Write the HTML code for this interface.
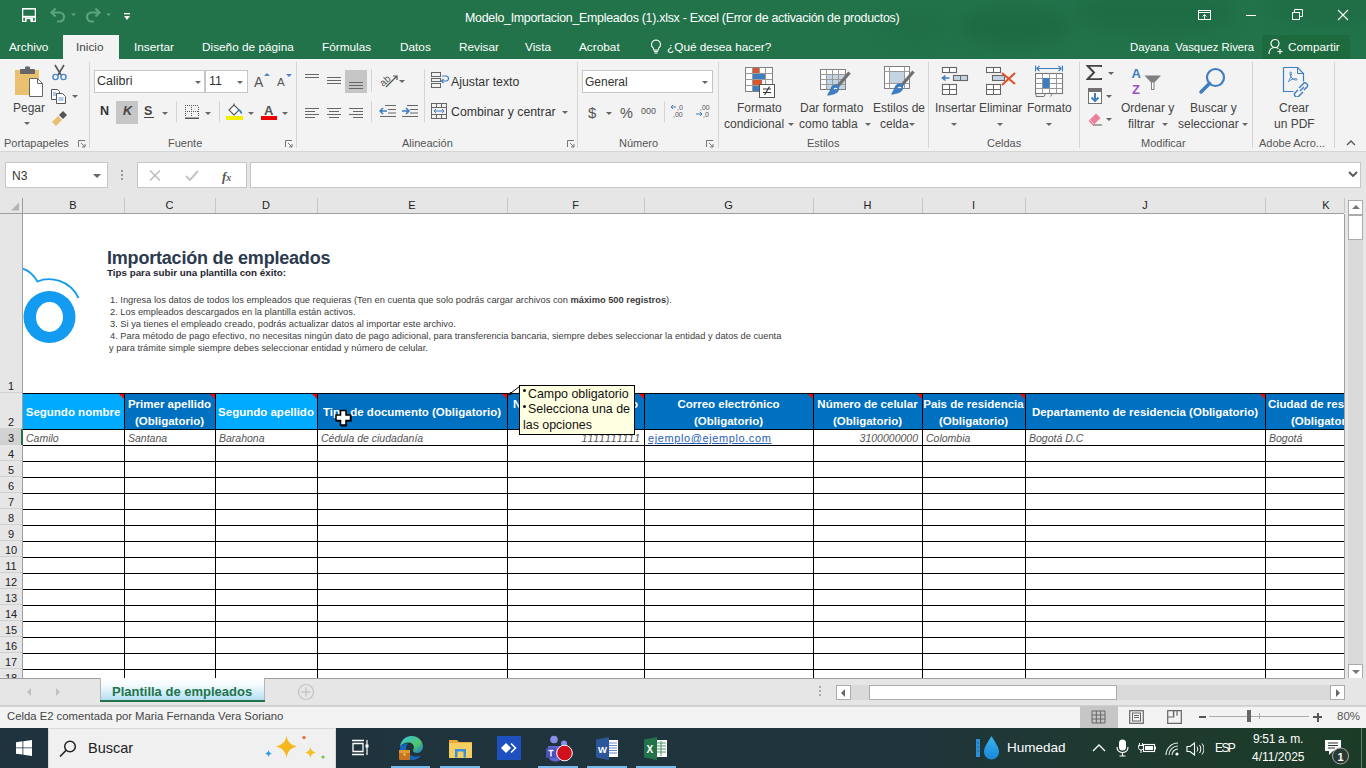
<!DOCTYPE html>
<html><head><meta charset="utf-8">
<style>
*{margin:0;padding:0;box-sizing:border-box}
html,body{width:1366px;height:768px;overflow:hidden;background:#fff;font-family:"Liberation Sans",sans-serif}
.a{position:absolute}
#title{left:0;top:0;width:1366px;height:59px;background:#22734a}
#ribbon{left:0;top:59px;width:1366px;height:93px;background:#f3f3f3;border-bottom:1px solid #d5d5d5}
#fbar{left:0;top:152px;width:1366px;height:46px;background:#e6e6e6}
#colhdr{left:0;top:198px;width:1344px;height:16px;background:#e6e6e6;border-bottom:1px solid #ababab}
#grid{left:0;top:214px;width:1344px;height:464px;background:#fff;overflow:hidden}
#vscroll{left:1345px;top:198px;width:21px;height:480px;background:#e6e6e6}
#tabs{left:0;top:678px;width:1366px;height:28px;background:#e6e6e6}
#status{left:0;top:706px;width:1366px;height:22px;background:#f3f3f3;border-top:1px solid #d5d5d5}
#taskbar{left:0;top:728px;width:1366px;height:40px;background:linear-gradient(90deg,#1f333e 0%,#20343d 65%,#1e3a2f 82%,#1c3b27 100%)}
.w{color:#fff}
.t{white-space:nowrap}
</style></head><body>

<div id="title" class="a">
<div class="a" style="left:0;top:0;width:1366px;height:59px;overflow:hidden">
<div class="a" style="left:960px;top:6px;width:110px;height:40px;border-radius:50%;background:#1c6840;filter:blur(7px);opacity:.7"></div>
<div class="a" style="left:1075px;top:-10px;width:160px;height:45px;border-radius:50%;background:#1c6840;filter:blur(8px);opacity:.6"></div>
<div class="a" style="left:1270px;top:-10px;width:110px;height:35px;border-radius:50%;background:#1c6840;filter:blur(8px);opacity:.5"></div>
<div class="a" style="left:880px;top:10px;width:70px;height:30px;border-radius:50%;background:#1e6c43;filter:blur(8px);opacity:.5"></div>
</div>
 <svg class="a" style="left:22px;top:8px" width="14" height="14" viewBox="0 0 14 14"><rect width="14" height="14" fill="#fff"/><rect x="1.3" y="1.6" width="11.4" height="6.2" fill="#22734a"/><rect x="1.3" y="9.8" width="11.4" height="3" fill="#22734a"/><rect x="3" y="9.8" width="8" height="4.2" fill="#fff"/><rect x="4.6" y="11.2" width="3.8" height="2.8" fill="#22734a"/></svg>
 <svg class="a" style="left:50px;top:7px" width="30" height="16" viewBox="0 0 30 16"><path d="M3 5.5h6.5a4.5 4.5 0 0 1 0 9H7" fill="none" stroke="#5ca57a" stroke-width="2.2"/><path d="M5.5 1.5L1.5 5.5l4 4" stroke="#5ca57a" stroke-width="2.2" fill="none"/><path d="M21 6.5h5l-2.5 2.5z" fill="#5ca57a"/></svg>
 <svg class="a" style="left:86px;top:7px" width="30" height="16" viewBox="0 0 30 16"><path d="M12 5.5H5.5a4.5 4.5 0 0 0 0 9H8" fill="none" stroke="#5ca57a" stroke-width="2.2"/><path d="M9.5 1.5l4 4-4 4" stroke="#5ca57a" stroke-width="2.2" fill="none"/><path d="M20 6.5h5l-2.5 2.5z" fill="#5ca57a"/></svg>
 <svg class="a" style="left:123px;top:12px" width="8" height="10" viewBox="0 0 8 10"><rect x="1" y="1" width="6" height="1.3" fill="#fff"/><path d="M1 4h6l-3 4z" fill="#fff"/></svg>
 <div class="a t w" style="left:465px;top:10px;font-size:12.4px;letter-spacing:-0.27px;line-height:16px">Modelo_Importacion_Empleados (1).xlsx - Excel (Error de activación de productos)</div>
 <svg class="a" style="left:1197px;top:9px" width="15" height="12" viewBox="0 0 15 12"><rect x="1.5" y="1.5" width="12" height="9" fill="none" stroke="#fff" stroke-width="1"/><path d="M1.5 3.5h12" stroke="#fff" stroke-width="1"/><path d="M7.5 10V5.5M5.5 7.5l2-2 2 2" stroke="#fff" stroke-width="1" fill="none"/></svg>
 <div class="a" style="left:1246px;top:15px;width:10px;height:1px;background:#fff"></div>
 <svg class="a" style="left:1292px;top:9px" width="12" height="12" viewBox="0 0 12 12"><rect x="0.5" y="3.5" width="7" height="7" fill="none" stroke="#fff" stroke-width="1"/><path d="M2.5 3.5V0.5h8v7h-3" fill="none" stroke="#fff" stroke-width="1"/></svg>
 <svg class="a" style="left:1337px;top:9px" width="12" height="12" viewBox="0 0 12 12"><path d="M1 1l10 10M11 1L1 11" stroke="#fff" stroke-width="1.1"/></svg>
 <div class="a t w" style="left:9px;top:40px;font-size:11.8px;line-height:14px">Archivo</div>
 <div class="a" style="left:63px;top:35px;width:56px;height:25px;background:#f3f3f3"></div>
 <div class="a t" style="left:76px;top:40px;font-size:11.8px;line-height:14px;color:#444">Inicio</div>
 <div class="a t w" style="left:134px;top:40px;font-size:11.8px;line-height:14px">Insertar</div>
 <div class="a t w" style="left:202px;top:40px;font-size:11.8px;line-height:14px">Diseño de página</div>
 <div class="a t w" style="left:322px;top:40px;font-size:11.8px;line-height:14px">Fórmulas</div>
 <div class="a t w" style="left:400px;top:40px;font-size:11.8px;line-height:14px">Datos</div>
 <div class="a t w" style="left:459px;top:40px;font-size:11.8px;line-height:14px">Revisar</div>
 <div class="a t w" style="left:525px;top:40px;font-size:11.8px;line-height:14px">Vista</div>
 <div class="a t w" style="left:579px;top:40px;font-size:11.8px;line-height:14px">Acrobat</div>
 <svg class="a" style="left:650px;top:39px" width="12" height="15" viewBox="0 0 12 15"><path d="M6 1a4.5 4.5 0 0 0-2.5 8.2V11h5V9.2A4.5 4.5 0 0 0 6 1z" fill="none" stroke="#fff" stroke-width="1.1"/><path d="M4 12.5h4M4.5 14h3" stroke="#fff" stroke-width="1"/></svg>
 <div class="a t w" style="left:667px;top:40px;font-size:11.8px;line-height:14px">¿Qué desea hacer?</div>
 <div class="a t w" style="left:1130px;top:40px;font-size:11.3px;line-height:14px">Dayana&nbsp; Vasquez Rivera</div>
 <div class="a" style="left:1262px;top:35px;width:88px;height:24px;background:#1c6a3e"></div>
 <svg class="a" style="left:1268px;top:38px" width="16" height="17" viewBox="0 0 16 17"><circle cx="7" cy="5.5" r="4" fill="none" stroke="#fff" stroke-width="1.2"/><path d="M1 16c0-4 2.5-6.5 6-6.5 1.5 0 2.6.4 3.5 1" fill="none" stroke="#fff" stroke-width="1.2"/><path d="M12 11v5M9.5 13.5h5" stroke="#fff" stroke-width="1.2"/></svg>
 <div class="a t w" style="left:1288px;top:40px;font-size:11.8px;line-height:14px">Compartir</div>
</div>
<div id="ribbon" class="a">
</div>
<div id="ribc">
<svg class="a" style="left:14px;top:66px" width="30" height="31" viewBox="0 0 30 31"><rect x="1" y="4" width="24" height="25" fill="#e8c06f"/><rect x="6" y="3" width="15" height="5" rx="1" fill="#666"/><rect x="11" y="0.5" width="5" height="4" rx="1" fill="#666"/><path d="M15.5 12.5h8l5 5v13h-13z" fill="#fff" stroke="#666" stroke-width="1"/><path d="M23.5 12.5v5h5" fill="none" stroke="#666" stroke-width="1"/></svg>
<div class="a t" style="left:13px;top:101.8px;font-size:12px;line-height:12px;color:#444;">Pegar</div>
<div class="a" style="left:24px;top:122px;width:0;height:0;border-left:3px solid transparent;border-right:3px solid transparent;border-top:3px solid #666"></div>
<svg class="a" style="left:51px;top:64px" width="17" height="17" viewBox="0 0 17 17"><path d="M4 1l6 10M13 1L7 11" stroke="#555" stroke-width="1.6"/><circle cx="4.5" cy="13" r="2.6" fill="none" stroke="#4a86c8" stroke-width="1.4"/><circle cx="12.5" cy="13" r="2.6" fill="none" stroke="#4a86c8" stroke-width="1.4"/></svg>
<svg class="a" style="left:50px;top:88px" width="17" height="16" viewBox="0 0 17 16"><path d="M1.5 1.5h6l2 2v8h-8z" fill="#fff" stroke="#555"/><path d="M6.5 5.5h6l3 3v7h-9z" fill="#fff" stroke="#555"/><path d="M3 5h3M3 7h3M8.5 10h5M8.5 12h5" stroke="#4a86c8" stroke-width="0.9"/></svg>
<div class="a" style="left:72px;top:95px;width:0;height:0;border-left:3px solid transparent;border-right:3px solid transparent;border-top:3px solid #666"></div>
<svg class="a" style="left:51px;top:110px" width="17" height="17" viewBox="0 0 17 17"><path d="M1 12l6-6 4 4-6 6z" fill="#e8c06f"/><path d="M8 5l4-4 4 4-4 4z" fill="#555"/></svg>
<div class="a t" style="left:4px;top:138.2px;font-size:11px;line-height:11px;color:#555;">Portapapeles</div>
<svg class="a" style="left:78px;top:140px" width="8" height="8" viewBox="0 0 8 8"><path d="M0.5 7V0.5H7" fill="none" stroke="#777" stroke-width="1"/><path d="M3 3l4 4M4 7h3V4" fill="none" stroke="#777" stroke-width="1"/></svg>
<div class="a" style="left:89px;top:62px;width:1px;height:86px;background:#d5d5d5"></div>
<div class="a" style="left:94px;top:70px;width:111px;height:23px;background:#fff;border:1px solid #c6c6c6"></div>
<div class="a t" style="left:97px;top:75.4px;font-size:12.5px;line-height:12.5px;color:#333;">Calibri</div>
<div class="a" style="left:195px;top:81px;width:0;height:0;border-left:3px solid transparent;border-right:3px solid transparent;border-top:3px solid #666"></div>
<div class="a" style="left:205px;top:70px;width:43px;height:23px;background:#fff;border:1px solid #c6c6c6"></div>
<div class="a t" style="left:209px;top:75.4px;font-size:12.5px;line-height:12.5px;color:#333;">11</div>
<div class="a" style="left:237px;top:81px;width:0;height:0;border-left:3px solid transparent;border-right:3px solid transparent;border-top:3px solid #666"></div>
<div class="a t" style="left:254px;top:75.1px;font-size:14px;line-height:14px;color:#555;">A</div>
<div class="a" style="left:264px;top:73px;width:0;height:0;border-left:3px solid transparent;border-right:3px solid transparent;border-bottom:3px solid #4a86c8"></div>
<div class="a t" style="left:277px;top:77.3px;font-size:11.5px;line-height:11.5px;color:#555;">A</div>
<div class="a" style="left:286px;top:74px;width:0;height:0;border-left:3px solid transparent;border-right:3px solid transparent;border-top:3px solid #4a86c8"></div>
<div class="a t" style="left:100px;top:105.4px;font-size:12.5px;line-height:12.5px;color:#333;font-weight:bold">N</div>
<div class="a" style="left:116px;top:101px;width:22px;height:23px;background:#c6c6c6"></div>
<div class="a t" style="left:123px;top:105.4px;font-size:12.5px;line-height:12.5px;color:#444;font-weight:bold;font-style:italic">K</div>
<div class="a t" style="left:144px;top:105.4px;font-size:12.5px;line-height:12.5px;color:#444;font-weight:bold">S</div>
<div class="a" style="left:144px;top:117px;width:10px;height:1px;background:#444"></div>
<div class="a" style="left:162px;top:112px;width:0;height:0;border-left:3px solid transparent;border-right:3px solid transparent;border-top:3px solid #666"></div>
<div class="a" style="left:176px;top:101px;width:1px;height:21px;background:#d5d5d5"></div>
<svg class="a" style="left:185px;top:105px" width="14" height="14" viewBox="0 0 14 14"><g fill="#555"><rect x="0" y="0" width="1" height="1"/><rect x="0" y="6" width="1" height="1"/><rect x="2" y="0" width="1" height="1"/><rect x="2" y="6" width="1" height="1"/><rect x="4" y="0" width="1" height="1"/><rect x="4" y="6" width="1" height="1"/><rect x="6" y="0" width="1" height="1"/><rect x="6" y="6" width="1" height="1"/><rect x="8" y="0" width="1" height="1"/><rect x="8" y="6" width="1" height="1"/><rect x="10" y="0" width="1" height="1"/><rect x="10" y="6" width="1" height="1"/><rect x="12" y="0" width="1" height="1"/><rect x="12" y="6" width="1" height="1"/><rect x="0" y="2" width="1" height="1"/><rect x="6" y="2" width="1" height="1"/><rect x="13" y="2" width="1" height="1"/><rect x="0" y="4" width="1" height="1"/><rect x="6" y="4" width="1" height="1"/><rect x="13" y="4" width="1" height="1"/><rect x="0" y="6" width="1" height="1"/><rect x="6" y="6" width="1" height="1"/><rect x="13" y="6" width="1" height="1"/><rect x="0" y="8" width="1" height="1"/><rect x="6" y="8" width="1" height="1"/><rect x="13" y="8" width="1" height="1"/><rect x="0" y="10" width="1" height="1"/><rect x="6" y="10" width="1" height="1"/><rect x="13" y="10" width="1" height="1"/></g><rect x="0" y="12.5" width="14" height="1.5" fill="#555"/></svg>
<div class="a" style="left:205px;top:112px;width:0;height:0;border-left:3px solid transparent;border-right:3px solid transparent;border-top:3px solid #666"></div>
<div class="a" style="left:219px;top:101px;width:1px;height:21px;background:#d5d5d5"></div>
<svg class="a" style="left:226px;top:103px" width="18" height="17" viewBox="0 0 18 17"><path d="M3 7l5-5 5 5-5 5z" fill="#fff" stroke="#555" stroke-width="1.1"/><path d="M8 2V0.5" stroke="#555"/><path d="M13 7c1.5 1 2.5 2.5 2.5 3.5" stroke="#3d7dc0" stroke-width="2" fill="none"/><rect x="0" y="13" width="17" height="4" fill="#f2ef00"/></svg>
<div class="a" style="left:248px;top:112px;width:0;height:0;border-left:3px solid transparent;border-right:3px solid transparent;border-top:3px solid #666"></div>
<div class="a t" style="left:264px;top:104.2px;font-size:13px;line-height:13px;color:#555;font-weight:bold">A</div>
<div class="a" style="left:261px;top:116px;width:16px;height:4px;background:#e00"></div>
<div class="a" style="left:282px;top:112px;width:0;height:0;border-left:3px solid transparent;border-right:3px solid transparent;border-top:3px solid #666"></div>
<div class="a t" style="left:168px;top:138.2px;font-size:11px;line-height:11px;color:#555;">Fuente</div>
<svg class="a" style="left:285px;top:140px" width="8" height="8" viewBox="0 0 8 8"><path d="M0.5 7V0.5H7" fill="none" stroke="#777" stroke-width="1"/><path d="M3 3l4 4M4 7h3V4" fill="none" stroke="#777" stroke-width="1"/></svg>
<div class="a" style="left:296px;top:62px;width:1px;height:86px;background:#d5d5d5"></div>
<div class="a" style="left:305px;top:74px;width:14px;height:1px;background:#666"></div>
<div class="a" style="left:305px;top:77px;width:14px;height:1px;background:#666"></div>
<div class="a" style="left:327px;top:77px;width:14px;height:1px;background:#666"></div>
<div class="a" style="left:327px;top:80px;width:14px;height:1px;background:#666"></div>
<div class="a" style="left:327px;top:83px;width:14px;height:1px;background:#666"></div>
<div class="a" style="left:345px;top:70px;width:22px;height:23px;background:#c6c6c6"></div>
<div class="a" style="left:349px;top:82px;width:14px;height:1px;background:#666"></div>
<div class="a" style="left:349px;top:85px;width:14px;height:1px;background:#666"></div>
<div class="a" style="left:349px;top:88px;width:14px;height:1px;background:#666"></div>
<div class="a" style="left:371px;top:69px;width:1px;height:23px;background:#d5d5d5"></div>
<svg class="a" style="left:378px;top:72px" width="22" height="17" viewBox="0 0 22 17"><text x="1" y="12" font-size="10" fill="#555" font-family="Liberation Sans" transform="rotate(-40 7 8)">ab</text><path d="M8 15L19 4M15 4h4v4" stroke="#555" stroke-width="1.2" fill="none"/></svg>
<div class="a" style="left:399px;top:80px;width:0;height:0;border-left:3px solid transparent;border-right:3px solid transparent;border-top:3px solid #666"></div>
<div class="a" style="left:424px;top:69px;width:1px;height:53px;background:#d5d5d5"></div>
<svg class="a" style="left:431px;top:72px" width="18" height="16" viewBox="0 0 18 16"><rect x="0.5" y="0.5" width="9" height="4" fill="none" stroke="#666"/><rect x="0.5" y="6.5" width="9" height="3" fill="none" stroke="#666"/><rect x="0.5" y="11.5" width="9" height="4" fill="none" stroke="#666"/><path d="M11 4h4a2 2 0 0 1 0 5h-4M12.5 7l-2 2 2 2" fill="none" stroke="#3d7dc0" stroke-width="1.2"/></svg>
<div class="a t" style="left:451px;top:75.6px;font-size:12.3px;line-height:12.3px;color:#333;">Ajustar texto</div>
<div class="a" style="left:305px;top:108px;width:14px;height:1px;background:#666"></div>
<div class="a" style="left:305px;top:111px;width:10px;height:1px;background:#666"></div>
<div class="a" style="left:305px;top:114px;width:14px;height:1px;background:#666"></div>
<div class="a" style="left:305px;top:117px;width:10px;height:1px;background:#666"></div>
<div class="a" style="left:327px;top:108px;width:14px;height:1px;background:#666"></div>
<div class="a" style="left:329px;top:111px;width:10px;height:1px;background:#666"></div>
<div class="a" style="left:327px;top:114px;width:14px;height:1px;background:#666"></div>
<div class="a" style="left:329px;top:117px;width:10px;height:1px;background:#666"></div>
<div class="a" style="left:349px;top:108px;width:14px;height:1px;background:#666"></div>
<div class="a" style="left:353px;top:111px;width:10px;height:1px;background:#666"></div>
<div class="a" style="left:349px;top:114px;width:14px;height:1px;background:#666"></div>
<div class="a" style="left:353px;top:117px;width:10px;height:1px;background:#666"></div>
<div class="a" style="left:371px;top:101px;width:1px;height:21px;background:#d5d5d5"></div>
<svg class="a" style="left:379px;top:104px" width="17" height="14" viewBox="0 0 17 14"><path d="M6 1.5h11M9 5.5h8M9 9h8M1 12.5h16" stroke="#666"/><path d="M1 7h7M4 4L1 7l3 3" stroke="#3d7dc0" stroke-width="1.5" fill="none"/></svg>
<svg class="a" style="left:401px;top:104px" width="17" height="14" viewBox="0 0 17 14"><path d="M6 1.5h11M9 5.5h8M9 9h8M1 12.5h16" stroke="#666"/><path d="M1 7h7M5 4l3 3-3 3" stroke="#3d7dc0" stroke-width="1.5" fill="none"/></svg>
<svg class="a" style="left:431px;top:103px" width="17" height="17" viewBox="0 0 17 17"><rect x="0.5" y="0.5" width="15" height="15" fill="none" stroke="#666"/><path d="M0.5 4.5h15M0.5 11.5h15M5.5 0.5v4M10.5 0.5v4M5.5 11.5v4M10.5 11.5v4" stroke="#666"/><path d="M3 8h10M5 6l-2 2 2 2M11 6l2 2-2 2" stroke="#3d7dc0" fill="none"/></svg>
<div class="a t" style="left:451px;top:106.1px;font-size:12.3px;line-height:12.3px;color:#333;">Combinar y centrar</div>
<div class="a" style="left:562px;top:111px;width:0;height:0;border-left:3px solid transparent;border-right:3px solid transparent;border-top:3px solid #666"></div>
<div class="a t" style="left:402px;top:138.2px;font-size:11px;line-height:11px;color:#555;">Alineación</div>
<svg class="a" style="left:567px;top:140px" width="8" height="8" viewBox="0 0 8 8"><path d="M0.5 7V0.5H7" fill="none" stroke="#777" stroke-width="1"/><path d="M3 3l4 4M4 7h3V4" fill="none" stroke="#777" stroke-width="1"/></svg>
<div class="a" style="left:577px;top:62px;width:1px;height:86px;background:#d5d5d5"></div>
<div class="a" style="left:582px;top:70px;width:131px;height:23px;background:#fff;border:1px solid #c6c6c6"></div>
<div class="a t" style="left:585px;top:75.8px;font-size:12px;line-height:12px;color:#333;">General</div>
<div class="a" style="left:702px;top:81px;width:0;height:0;border-left:3px solid transparent;border-right:3px solid transparent;border-top:3px solid #666"></div>
<div class="a t" style="left:588px;top:105.3px;font-size:15px;line-height:15px;color:#555;">$</div>
<div class="a" style="left:606px;top:112px;width:0;height:0;border-left:3px solid transparent;border-right:3px solid transparent;border-top:3px solid #666"></div>
<div class="a t" style="left:620px;top:105.7px;font-size:14.5px;line-height:14.5px;color:#555;">%</div>
<div class="a t" style="left:641px;top:107.4px;font-size:9px;line-height:9px;color:#555;">000</div>
<div class="a" style="left:664px;top:101px;width:1px;height:21px;background:#d5d5d5"></div>
<svg class="a" style="left:670px;top:103px" width="18" height="16" viewBox="0 0 18 16"><text x="7" y="7" font-size="7" fill="#555" font-family="Liberation Sans">,0</text><text x="3" y="14" font-size="7" fill="#555" font-family="Liberation Sans">,00</text><path d="M1 4h5M3 2L1 4l2 2" stroke="#3d7dc0" fill="none"/></svg>
<svg class="a" style="left:695px;top:103px" width="18" height="16" viewBox="0 0 18 16"><text x="5" y="7" font-size="7" fill="#555" font-family="Liberation Sans">,00</text><text x="8" y="14" font-size="7" fill="#555" font-family="Liberation Sans">,0</text><path d="M1 11h6M5 9l2 2-2 2" stroke="#3d7dc0" fill="none"/></svg>
<div class="a t" style="left:619px;top:138.2px;font-size:11px;line-height:11px;color:#555;">Número</div>
<svg class="a" style="left:706px;top:140px" width="8" height="8" viewBox="0 0 8 8"><path d="M0.5 7V0.5H7" fill="none" stroke="#777" stroke-width="1"/><path d="M3 3l4 4M4 7h3V4" fill="none" stroke="#777" stroke-width="1"/></svg>
<div class="a" style="left:718px;top:62px;width:1px;height:86px;background:#d5d5d5"></div>
<svg class="a" style="left:745px;top:67px" width="31" height="31" viewBox="0 0 31 31"><rect x="0.5" y="0.5" width="27" height="24" fill="#fff" stroke="#808080"/><path d="M0.5 6.5h27M0.5 12.5h27M0.5 18.5h27M7.5 0.5v24M14.5 0.5v24M20.5 0.5v24" stroke="#9a9a9a"/><rect x="8" y="1" width="6" height="5" fill="#d9562f"/><rect x="8" y="7" width="12" height="5" fill="#3d7dc0"/><rect x="8" y="13" width="9" height="5" fill="#d9562f"/><rect x="8" y="19" width="6" height="5" fill="#3d7dc0"/><rect x="14.5" y="17.5" width="15" height="13" fill="#fff" stroke="#555"/><path d="M18 22h8M18 25.5h8M24.5 19.5l-5 8.5" stroke="#333" stroke-width="1.1"/></svg>
<div class="a t" style="left:737px;top:101.8px;font-size:12px;line-height:12px;color:#444;">Formato</div>
<div class="a t" style="left:724px;top:117.8px;font-size:12px;line-height:12px;color:#444;">condicional</div>
<div class="a" style="left:788px;top:123px;width:0;height:0;border-left:3px solid transparent;border-right:3px solid transparent;border-top:3px solid #666"></div>
<svg class="a" style="left:820px;top:68px" width="31" height="30" viewBox="0 0 31 30"><rect x="0.5" y="1.5" width="25" height="20" fill="#fff" stroke="#808080"/><rect x="7" y="7" width="18" height="14" fill="#c5d4e3"/><path d="M0.5 6.5h25M0.5 11.5h25M0.5 16.5h25M6.5 1.5v20M12.5 1.5v20M18.5 1.5v20" stroke="#9a9a9a"/><path d="M29.5 4.5L18 18" stroke="#707070" stroke-width="3.2"/><path d="M18.5 17c-3-2-7 0-8 3.5-.8 3-3 5.5-3.5 7 4 0 10-1.5 11.5-4.5 1-2 .8-4.5 0-6z" fill="#3d7dc0"/><path d="M14 21c1-1 2.5-1 3 0" stroke="#fff" stroke-width="1.2" fill="none"/></svg>
<div class="a t" style="left:800px;top:101.8px;font-size:12px;line-height:12px;color:#444;">Dar formato</div>
<div class="a t" style="left:799px;top:117.8px;font-size:12px;line-height:12px;color:#444;">como tabla</div>
<div class="a" style="left:865px;top:123px;width:0;height:0;border-left:3px solid transparent;border-right:3px solid transparent;border-top:3px solid #666"></div>
<svg class="a" style="left:884px;top:66px" width="31" height="31" viewBox="0 0 31 31"><rect x="0.5" y="0.5" width="25" height="22" fill="#fff" stroke="#808080"/><rect x="6" y="6" width="14" height="11" fill="#c5d4e3"/><path d="M0.5 5.5h25M0.5 17.5h25M5.5 0.5v22M20.5 0.5v22" stroke="#9a9a9a"/><path d="M29.5 5.5L18 19" stroke="#707070" stroke-width="3.2"/><path d="M18.5 18c-3-2-7 0-8 3.5-.8 3-3 5.5-3.5 7 4 0 10-1.5 11.5-4.5 1-2 .8-4.5 0-6z" fill="#3d7dc0"/><path d="M14 22c1-1 2.5-1 3 0" stroke="#fff" stroke-width="1.2" fill="none"/></svg>
<div class="a t" style="left:873px;top:101.8px;font-size:12px;line-height:12px;color:#444;">Estilos de</div>
<div class="a t" style="left:880px;top:117.8px;font-size:12px;line-height:12px;color:#444;">celda</div>
<div class="a" style="left:909px;top:123px;width:0;height:0;border-left:3px solid transparent;border-right:3px solid transparent;border-top:3px solid #666"></div>
<div class="a t" style="left:807px;top:138.2px;font-size:11px;line-height:11px;color:#555;">Estilos</div>
<div class="a" style="left:928px;top:62px;width:1px;height:86px;background:#d5d5d5"></div>
<svg class="a" style="left:941px;top:66px" width="28" height="29" viewBox="0 0 28 29"><rect x="1.5" y="1.5" width="14" height="5" fill="#fff" stroke="#666" stroke-width="1.1"/><path d="M8.5 1.5v5" stroke="#666"/><rect x="1.5" y="18.5" width="14" height="10" fill="#fff" stroke="#666" stroke-width="1.1"/><path d="M1.5 23.5h14M8.5 18.5v10" stroke="#666"/><rect x="12.5" y="9.5" width="14" height="5" fill="#c5d4e3" stroke="#666" stroke-width="1.1"/><path d="M19.5 9.5v5" stroke="#666"/><path d="M1.5 12h7M4.5 9.5L1.5 12l3 2.5" stroke="#3d7dc0" stroke-width="1.6" fill="none"/></svg>
<div class="a t" style="left:935px;top:101.8px;font-size:12px;line-height:12px;color:#444;">Insertar</div>
<div class="a" style="left:951px;top:123px;width:0;height:0;border-left:3px solid transparent;border-right:3px solid transparent;border-top:3px solid #666"></div>
<svg class="a" style="left:986px;top:66px" width="31" height="29" viewBox="0 0 31 29"><rect x="0.5" y="1.5" width="14" height="5" fill="#fff" stroke="#666" stroke-width="1.1"/><path d="M7.5 1.5v5" stroke="#666"/><rect x="0.5" y="18.5" width="14" height="10" fill="#fff" stroke="#666" stroke-width="1.1"/><path d="M0.5 23.5h14M7.5 18.5v10" stroke="#666"/><rect x="6.5" y="9.5" width="12" height="5" fill="#c5d4e3" stroke="#666" stroke-width="1.1"/><path d="M16 7l13 11M29 7L16 19" stroke="#e0522b" stroke-width="2.2"/></svg>
<div class="a t" style="left:979px;top:101.8px;font-size:12px;line-height:12px;color:#444;">Eliminar</div>
<div class="a" style="left:997px;top:123px;width:0;height:0;border-left:3px solid transparent;border-right:3px solid transparent;border-top:3px solid #666"></div>
<svg class="a" style="left:1035px;top:65px" width="31" height="33" viewBox="0 0 31 33"><path d="M1.5 3.5h25M1.5 3.5l3-2.5M1.5 3.5l3 2.5M26.5 3.5l-3-2.5M26.5 3.5l-3 2.5M0.5 0.5v6M27.5 0.5v6" stroke="#3d7dc0" stroke-width="1.1" fill="none"/><rect x="0.5" y="8.5" width="27" height="20" fill="#fff" stroke="#777" stroke-width="1.1"/><path d="M0.5 13.5h27M0.5 18.5h27M0.5 23.5h27M7.5 8.5v20M14.5 8.5v20M21.5 8.5v20" stroke="#999"/><rect x="8" y="13" width="6.5" height="10" fill="#3d7dc0"/><path d="M1 28.5v3h8l1.5-3h7l-2 3" fill="none" stroke="#777"/></svg>
<div class="a t" style="left:1027px;top:101.8px;font-size:12px;line-height:12px;color:#444;">Formato</div>
<div class="a" style="left:1046px;top:123px;width:0;height:0;border-left:3px solid transparent;border-right:3px solid transparent;border-top:3px solid #666"></div>
<div class="a t" style="left:987px;top:138.2px;font-size:11px;line-height:11px;color:#555;">Celdas</div>
<div class="a" style="left:1079px;top:62px;width:1px;height:86px;background:#d5d5d5"></div>
<svg class="a" style="left:1086px;top:65px" width="17" height="15" viewBox="0 0 17 15"><path d="M15 2V0.8H1.5L8 7.5 1.5 14.2H15V13" fill="none" stroke="#444" stroke-width="2"/></svg>
<div class="a" style="left:1108px;top:72px;width:0;height:0;border-left:3px solid transparent;border-right:3px solid transparent;border-top:3px solid #666"></div>
<svg class="a" style="left:1088px;top:88px" width="15" height="16" viewBox="0 0 15 16"><rect x="0.5" y="0.5" width="13" height="15" fill="#fff" stroke="#707070"/><rect x="0" y="0" width="14" height="4" fill="#707070"/><path d="M7 5v8.5M3.5 9.5L7 13l3.5-3.5" stroke="#3d7dc0" stroke-width="2" fill="none"/></svg>
<div class="a" style="left:1106px;top:95px;width:0;height:0;border-left:3px solid transparent;border-right:3px solid transparent;border-top:3px solid #666"></div>
<svg class="a" style="left:1088px;top:112px" width="15" height="14" viewBox="0 0 15 14"><path d="M0.5 9l7.5-7.5 4.5 4.5L5 13.5z" fill="#ec7f9b"/><path d="M1.5 7.5l4.5 4.5" stroke="#f7c3d0" stroke-width="1"/><path d="M5 13h9" stroke="#707070" stroke-width="1.2"/></svg>
<div class="a" style="left:1106px;top:118px;width:0;height:0;border-left:3px solid transparent;border-right:3px solid transparent;border-top:3px solid #666"></div>
<svg class="a" style="left:1130px;top:66px" width="34" height="30" viewBox="0 0 34 30"><text x="1.5" y="12" font-size="13" font-weight="bold" fill="#3d7dc0" font-family="Liberation Sans">A</text><text x="2" y="28" font-size="13" font-weight="bold" fill="#9b4fc4" font-family="Liberation Sans">Z</text><path d="M14.5 9.5h16.5l-6.5 7v7.5h-3.5v-7.5z" fill="#808080"/><path d="M22 16.5v6.5h1.5v-6.5" fill="#fff"/></svg>
<div class="a t" style="left:1121px;top:101.8px;font-size:12px;line-height:12px;color:#444;">Ordenar y</div>
<div class="a t" style="left:1128px;top:117.8px;font-size:12px;line-height:12px;color:#444;">filtrar</div>
<div class="a" style="left:1162px;top:123px;width:0;height:0;border-left:3px solid transparent;border-right:3px solid transparent;border-top:3px solid #666"></div>
<svg class="a" style="left:1196px;top:66px" width="32" height="30" viewBox="0 0 32 30"><circle cx="19.5" cy="11.5" r="8.5" fill="none" stroke="#3d7dc0" stroke-width="2.2"/><path d="M13.5 17.5L5 26" stroke="#3d7dc0" stroke-width="3.5" stroke-linecap="round"/></svg>
<div class="a t" style="left:1190px;top:101.8px;font-size:12px;line-height:12px;color:#444;">Buscar y</div>
<div class="a t" style="left:1178px;top:117.8px;font-size:12px;line-height:12px;color:#444;">seleccionar</div>
<div class="a" style="left:1242px;top:123px;width:0;height:0;border-left:3px solid transparent;border-right:3px solid transparent;border-top:3px solid #666"></div>
<div class="a t" style="left:1141px;top:138.2px;font-size:11px;line-height:11px;color:#555;">Modificar</div>
<div class="a" style="left:1252px;top:62px;width:1px;height:86px;background:#d5d5d5"></div>
<svg class="a" style="left:1282px;top:66px" width="28" height="31" viewBox="0 0 28 31"><path d="M1.5 1.5h14l6 6v8M1.5 1.5v24h10" fill="none" stroke="#3d7dc0" stroke-width="1.2"/><path d="M15.5 1.5v6h6" fill="none" stroke="#3d7dc0"/><path d="M7 15c2-5 3-8 2-9s-2 3 1 6 6 2 5 1-6 0-9 3" fill="none" stroke="#3d7dc0" stroke-width="0.9"/><path d="M17 22l4-4a2.5 2.5 0 0 1 4 3l-3 3M21 26l-4 4a2.5 2.5 0 0 1-4-3l3-3M18 25l4-4" fill="none" stroke="#3d7dc0" stroke-width="1.4"/></svg>
<div class="a t" style="left:1279px;top:101.8px;font-size:12px;line-height:12px;color:#444;">Crear</div>
<div class="a t" style="left:1274px;top:117.8px;font-size:12px;line-height:12px;color:#444;">un PDF</div>
<div class="a t" style="left:1259px;top:138.2px;font-size:11px;line-height:11px;color:#555;">Adobe Acro...</div>
<div class="a" style="left:1334px;top:62px;width:1px;height:86px;background:#d5d5d5"></div>
<svg class="a" style="left:1346px;top:139px" width="10" height="7" viewBox="0 0 10 7"><path d="M1 6l4-4 4 4" stroke="#555" stroke-width="1.3" fill="none"/></svg>
</div>

<div id="fbar" class="a"></div>
<div class="a" style="left:5px;top:162px;width:103px;height:26px;background:#fff;border:1px solid #c6c6c6"></div>
<div class="a t" style="left:12px;top:169.8px;font-size:12px;line-height:12px;color:#333;">N3</div>
<div class="a" style="left:93px;top:174px;width:0;height:0;border-left:4px solid transparent;border-right:4px solid transparent;border-top:4px solid #666"></div>
<div class="a" style="left:121px;top:170px;width:2px;height:2px;background:#999"></div><div class="a" style="left:121px;top:174px;width:2px;height:2px;background:#999"></div><div class="a" style="left:121px;top:178px;width:2px;height:2px;background:#999"></div>
<div class="a" style="left:137px;top:162px;width:110px;height:26px;background:#fff;border:1px solid #c6c6c6"></div>
<svg class="a" style="left:149px;top:170px" width="12" height="11" viewBox="0 0 12 11"><path d="M1 0.5l10 10M11 0.5l-10 10" stroke="#bbb" stroke-width="1.4"/></svg>
<svg class="a" style="left:185px;top:170px" width="14" height="11" viewBox="0 0 14 11"><path d="M1 6l4 4 8-9" stroke="#c4c4c4" stroke-width="2" fill="none"/></svg>
<div class="a t" style="left:222px;top:170.0px;font-size:13px;line-height:13px;color:#555;font-family:'Liberation Serif',serif;font-weight:bold"><i>f</i><span style="font-size:10px"><i>x</i></span></div>
<div class="a" style="left:250px;top:162px;width:1111px;height:26px;background:#fff;border:1px solid #c6c6c6"></div>
<svg class="a" style="left:1348px;top:171px" width="10" height="7" viewBox="0 0 10 7"><path d="M1 1l4 4 4-4" stroke="#555" stroke-width="1.8" fill="none"/></svg>
<div id="colhdr" class="a"></div>
<svg class="a" style="left:11px;top:202px" width="9" height="9" viewBox="0 0 9 9"><path d="M8 0.5V8.5H0z" fill="#b4b4b4"/></svg>
<div class="a" style="left:124px;top:198px;width:1px;height:15px;background:#c6c6c6"></div>
<div class="a t" style="left:22px;width:102px;text-align:center;top:199.7px;font-size:11px;line-height:11px;color:#222;">B</div>
<div class="a" style="left:215px;top:198px;width:1px;height:15px;background:#c6c6c6"></div>
<div class="a t" style="left:124px;width:91px;text-align:center;top:199.7px;font-size:11px;line-height:11px;color:#222;">C</div>
<div class="a" style="left:317px;top:198px;width:1px;height:15px;background:#c6c6c6"></div>
<div class="a t" style="left:215px;width:102px;text-align:center;top:199.7px;font-size:11px;line-height:11px;color:#222;">D</div>
<div class="a" style="left:507px;top:198px;width:1px;height:15px;background:#c6c6c6"></div>
<div class="a t" style="left:317px;width:190px;text-align:center;top:199.7px;font-size:11px;line-height:11px;color:#222;">E</div>
<div class="a" style="left:644px;top:198px;width:1px;height:15px;background:#c6c6c6"></div>
<div class="a t" style="left:507px;width:137px;text-align:center;top:199.7px;font-size:11px;line-height:11px;color:#222;">F</div>
<div class="a" style="left:813px;top:198px;width:1px;height:15px;background:#c6c6c6"></div>
<div class="a t" style="left:644px;width:169px;text-align:center;top:199.7px;font-size:11px;line-height:11px;color:#222;">G</div>
<div class="a" style="left:922px;top:198px;width:1px;height:15px;background:#c6c6c6"></div>
<div class="a t" style="left:813px;width:109px;text-align:center;top:199.7px;font-size:11px;line-height:11px;color:#222;">H</div>
<div class="a" style="left:1025px;top:198px;width:1px;height:15px;background:#c6c6c6"></div>
<div class="a t" style="left:922px;width:103px;text-align:center;top:199.7px;font-size:11px;line-height:11px;color:#222;">I</div>
<div class="a" style="left:1265px;top:198px;width:1px;height:15px;background:#c6c6c6"></div>
<div class="a t" style="left:1025px;width:240px;text-align:center;top:199.7px;font-size:11px;line-height:11px;color:#222;">J</div>
<div class="a" style="left:1344px;top:198px;width:1px;height:15px;background:#c6c6c6"></div>
<div class="a t" style="left:1265px;width:122px;text-align:center;top:199.7px;font-size:11px;line-height:11px;color:#222;">K</div>
<div class="a" style="left:0;top:213px;width:1344px;height:1px;background:#9e9e9e"></div>
<div class="a" style="left:22px;top:198px;width:1px;height:480px;background:#9e9e9e"></div>
<div id="grid" class="a"></div>
<div id="gridc">
<div class="a" style="left:0;top:214px;width:22px;height:464px;background:#e6e6e6"></div>
<div class="a" style="left:0;top:392px;width:22px;height:1px;background:#d0d0d0"></div>
<div class="a t" style="left:0px;width:22px;text-align:center;top:380.7px;font-size:11px;line-height:11px;color:#222;">1</div>
<div class="a" style="left:0;top:428px;width:22px;height:1px;background:#d0d0d0"></div>
<div class="a t" style="left:0px;width:22px;text-align:center;top:416.7px;font-size:11px;line-height:11px;color:#222;">2</div>
<div class="a" style="left:0;top:429px;width:22px;height:16px;background:#d2d2d2"></div>
<div class="a" style="left:0;top:444px;width:22px;height:1px;background:#d0d0d0"></div>
<div class="a t" style="left:0px;width:22px;text-align:center;top:432.7px;font-size:11px;line-height:11px;color:#222;">3</div>
<div class="a" style="left:0;top:460px;width:22px;height:1px;background:#d0d0d0"></div>
<div class="a t" style="left:0px;width:22px;text-align:center;top:448.7px;font-size:11px;line-height:11px;color:#222;">4</div>
<div class="a" style="left:0;top:476px;width:22px;height:1px;background:#d0d0d0"></div>
<div class="a t" style="left:0px;width:22px;text-align:center;top:464.7px;font-size:11px;line-height:11px;color:#222;">5</div>
<div class="a" style="left:0;top:492px;width:22px;height:1px;background:#d0d0d0"></div>
<div class="a t" style="left:0px;width:22px;text-align:center;top:480.7px;font-size:11px;line-height:11px;color:#222;">6</div>
<div class="a" style="left:0;top:508px;width:22px;height:1px;background:#d0d0d0"></div>
<div class="a t" style="left:0px;width:22px;text-align:center;top:496.7px;font-size:11px;line-height:11px;color:#222;">7</div>
<div class="a" style="left:0;top:524px;width:22px;height:1px;background:#d0d0d0"></div>
<div class="a t" style="left:0px;width:22px;text-align:center;top:512.7px;font-size:11px;line-height:11px;color:#222;">8</div>
<div class="a" style="left:0;top:540px;width:22px;height:1px;background:#d0d0d0"></div>
<div class="a t" style="left:0px;width:22px;text-align:center;top:528.7px;font-size:11px;line-height:11px;color:#222;">9</div>
<div class="a" style="left:0;top:556px;width:22px;height:1px;background:#d0d0d0"></div>
<div class="a t" style="left:0px;width:22px;text-align:center;top:544.7px;font-size:11px;line-height:11px;color:#222;">10</div>
<div class="a" style="left:0;top:572px;width:22px;height:1px;background:#d0d0d0"></div>
<div class="a t" style="left:0px;width:22px;text-align:center;top:560.7px;font-size:11px;line-height:11px;color:#222;">11</div>
<div class="a" style="left:0;top:588px;width:22px;height:1px;background:#d0d0d0"></div>
<div class="a t" style="left:0px;width:22px;text-align:center;top:576.7px;font-size:11px;line-height:11px;color:#222;">12</div>
<div class="a" style="left:0;top:604px;width:22px;height:1px;background:#d0d0d0"></div>
<div class="a t" style="left:0px;width:22px;text-align:center;top:592.7px;font-size:11px;line-height:11px;color:#222;">13</div>
<div class="a" style="left:0;top:620px;width:22px;height:1px;background:#d0d0d0"></div>
<div class="a t" style="left:0px;width:22px;text-align:center;top:608.7px;font-size:11px;line-height:11px;color:#222;">14</div>
<div class="a" style="left:0;top:636px;width:22px;height:1px;background:#d0d0d0"></div>
<div class="a t" style="left:0px;width:22px;text-align:center;top:624.7px;font-size:11px;line-height:11px;color:#222;">15</div>
<div class="a" style="left:0;top:652px;width:22px;height:1px;background:#d0d0d0"></div>
<div class="a t" style="left:0px;width:22px;text-align:center;top:640.7px;font-size:11px;line-height:11px;color:#222;">16</div>
<div class="a" style="left:0;top:668px;width:22px;height:1px;background:#d0d0d0"></div>
<div class="a t" style="left:0px;width:22px;text-align:center;top:656.7px;font-size:11px;line-height:11px;color:#222;">17</div>
<div class="a" style="left:0;top:684px;width:22px;height:1px;background:#d0d0d0"></div>
<div class="a t" style="left:0px;width:22px;text-align:center;top:672.7px;font-size:11px;line-height:11px;color:#222;">18</div>
<svg class="a" style="left:23px;top:262px" width="60" height="84" viewBox="23 262 60 84"><path fill-rule="evenodd" d="M23.5 317a26 26 0 1 0 52 0a26 26 0 1 0 -52 0zM36 317a13.5 15 0 1 0 27 0a13.5 15 0 1 0 -27 0z" fill="#129bf0"/><path d="M22 268.5C28 270 33 274 37.5 281.5C50 276 70 280 78.5 298" fill="none" stroke="#129bf0" stroke-width="1.8"/></svg>
<div class="a t" style="left:107px;top:249.1px;font-size:18px;line-height:18px;color:#2b3a4e;font-weight:bold;letter-spacing:-0.2px">Importación de empleados</div>
<div class="a t" style="left:107px;top:268.3px;font-size:9.8px;line-height:9.8px;color:#1e2530;font-weight:bold">Tips para subir una plantilla con éxito:</div>
<div class="a t" style="left:110px;top:295.6px;font-size:9.3px;line-height:9.3px;color:#3c3c3c;">1. Ingresa los datos de todos los empleados que requieras (Ten en cuenta que solo podrás cargar archivos con <b>máximo 500 registros</b>).</div>
<div class="a t" style="left:110px;top:307.7px;font-size:9.3px;line-height:9.3px;color:#3c3c3c;">2. Los empleados descargados en la plantilla están activos.</div>
<div class="a t" style="left:110px;top:319.7px;font-size:9.3px;line-height:9.3px;color:#3c3c3c;">3. Si ya tienes el empleado creado, podrás actualizar datos al importar este archivo.</div>
<div class="a t" style="left:110px;top:332.1px;font-size:9.3px;line-height:9.3px;color:#3c3c3c;">4. Para método de pago efectivo, no necesitas ningún dato de pago adicional, para transferencia bancaria, siempre debes seleccionar la entidad y datos de cuenta</div>
<div class="a t" style="left:109px;top:344.1px;font-size:9.3px;line-height:9.3px;color:#3c3c3c;">y para trámite simple siempre debes seleccionar entidad y número de celular.</div>
<div class="a" style="left:22px;top:393px;width:102px;height:36px;background:#00aaff"></div>
<div class="a t" style="left:22px;width:102px;text-align:center;top:407px;font-size:11.5px;line-height:11.5px;color:#fff;font-weight:bold">Segundo nombre</div>
<svg class="a" style="left:119px;top:394px" width="5" height="5" viewBox="0 0 5 5"><path d="M0 0h5v5z" fill="#ff0000"/></svg>
<div class="a" style="left:124px;top:393px;width:91px;height:36px;background:#0070c0"></div>
<div class="a t" style="left:124px;width:91px;text-align:center;top:399px;font-size:11.5px;line-height:11.5px;color:#fff;font-weight:bold">Primer apellido</div>
<div class="a t" style="left:124px;width:91px;text-align:center;top:416px;font-size:11.5px;line-height:11.5px;color:#fff;font-weight:bold">(Obligatorio)</div>
<svg class="a" style="left:210px;top:394px" width="5" height="5" viewBox="0 0 5 5"><path d="M0 0h5v5z" fill="#ff0000"/></svg>
<div class="a" style="left:215px;top:393px;width:102px;height:36px;background:#00aaff"></div>
<div class="a t" style="left:215px;width:102px;text-align:center;top:407px;font-size:11.5px;line-height:11.5px;color:#fff;font-weight:bold">Segundo apellido</div>
<svg class="a" style="left:312px;top:394px" width="5" height="5" viewBox="0 0 5 5"><path d="M0 0h5v5z" fill="#ff0000"/></svg>
<div class="a" style="left:317px;top:393px;width:190px;height:36px;background:#0070c0"></div>
<div class="a t" style="left:317px;width:190px;text-align:center;top:407px;font-size:11.5px;line-height:11.5px;color:#fff;font-weight:bold">Tipo de documento (Obligatorio)</div>
<svg class="a" style="left:502px;top:394px" width="5" height="5" viewBox="0 0 5 5"><path d="M0 0h5v5z" fill="#ff0000"/></svg>
<div class="a" style="left:507px;top:393px;width:137px;height:36px;background:#0070c0"></div>
<div class="a t" style="left:507px;width:137px;text-align:center;top:399px;font-size:11.5px;line-height:11.5px;color:#fff;font-weight:bold">Número de documento</div>
<div class="a t" style="left:507px;width:137px;text-align:center;top:416px;font-size:11.5px;line-height:11.5px;color:#fff;font-weight:bold">(Obligatorio)</div>
<svg class="a" style="left:639px;top:394px" width="5" height="5" viewBox="0 0 5 5"><path d="M0 0h5v5z" fill="#ff0000"/></svg>
<div class="a" style="left:644px;top:393px;width:169px;height:36px;background:#0070c0"></div>
<div class="a t" style="left:644px;width:169px;text-align:center;top:399px;font-size:11.5px;line-height:11.5px;color:#fff;font-weight:bold">Correo electrónico</div>
<div class="a t" style="left:644px;width:169px;text-align:center;top:416px;font-size:11.5px;line-height:11.5px;color:#fff;font-weight:bold">(Obligatorio)</div>
<svg class="a" style="left:808px;top:394px" width="5" height="5" viewBox="0 0 5 5"><path d="M0 0h5v5z" fill="#ff0000"/></svg>
<div class="a" style="left:813px;top:393px;width:109px;height:36px;background:#0070c0"></div>
<div class="a t" style="left:813px;width:109px;text-align:center;top:399px;font-size:11.5px;line-height:11.5px;color:#fff;font-weight:bold">Número de celular</div>
<div class="a t" style="left:813px;width:109px;text-align:center;top:416px;font-size:11.5px;line-height:11.5px;color:#fff;font-weight:bold">(Obligatorio)</div>
<svg class="a" style="left:917px;top:394px" width="5" height="5" viewBox="0 0 5 5"><path d="M0 0h5v5z" fill="#ff0000"/></svg>
<div class="a" style="left:922px;top:393px;width:103px;height:36px;background:#0070c0"></div>
<div class="a t" style="left:922px;width:103px;text-align:center;top:399px;font-size:11.5px;line-height:11.5px;color:#fff;font-weight:bold">Pais de residencia</div>
<div class="a t" style="left:922px;width:103px;text-align:center;top:416px;font-size:11.5px;line-height:11.5px;color:#fff;font-weight:bold">(Obligatorio)</div>
<svg class="a" style="left:1020px;top:394px" width="5" height="5" viewBox="0 0 5 5"><path d="M0 0h5v5z" fill="#ff0000"/></svg>
<div class="a" style="left:1025px;top:393px;width:240px;height:36px;background:#0070c0"></div>
<div class="a t" style="left:1025px;width:240px;text-align:center;top:407px;font-size:11.5px;line-height:11.5px;color:#fff;font-weight:bold">Departamento de residencia (Obligatorio)</div>
<svg class="a" style="left:1260px;top:394px" width="5" height="5" viewBox="0 0 5 5"><path d="M0 0h5v5z" fill="#ff0000"/></svg>
<div class="a" style="left:1265px;top:393px;width:79px;height:36px;background:#0070c0"></div>
<div class="a t" style="left:1268px;top:399px;font-size:11.5px;line-height:11.5px;color:#fff;font-weight:bold">Ciudad de residencia</div>
<div class="a t" style="left:1291px;top:416px;font-size:11.5px;line-height:11.5px;color:#fff;font-weight:bold">(Obligatorio)</div>
<div class="a t" style="left:26px;top:432.6px;font-size:10.5px;line-height:10.5px;color:#555;font-style:italic">Camilo</div>
<div class="a t" style="left:128px;top:432.6px;font-size:10.5px;line-height:10.5px;color:#555;font-style:italic">Santana</div>
<div class="a t" style="left:219px;top:432.6px;font-size:10.5px;line-height:10.5px;color:#555;font-style:italic">Barahona</div>
<div class="a t" style="left:321px;top:432.6px;font-size:10.5px;line-height:10.5px;color:#555;font-style:italic">Cédula de ciudadanía</div>
<div class="a t" style="right:726px;text-align:right;top:432.6px;font-size:10.5px;line-height:10.5px;color:#555;font-style:italic;font-kerning:none">1111111111</div>
<div class="a t" style="left:648px;top:433.2px;font-size:11px;line-height:11px;color:#2a62b8;text-decoration:underline;letter-spacing:0.6px">ejemplo@ejemplo.com</div>
<div class="a t" style="right:448px;text-align:right;top:432.6px;font-size:10.5px;line-height:10.5px;color:#555;font-style:italic">3100000000</div>
<div class="a t" style="left:926px;top:432.6px;font-size:10.5px;line-height:10.5px;color:#555;font-style:italic">Colombia</div>
<div class="a t" style="left:1029px;top:432.6px;font-size:10.5px;line-height:10.5px;color:#555;font-style:italic">Bogotá D.C</div>
<div class="a t" style="left:1269px;top:432.6px;font-size:10.5px;line-height:10.5px;color:#555;font-style:italic">Bogotá</div>
<div class="a" style="left:22px;top:393px;width:1322px;height:1px;background:#000"></div>
<div class="a" style="left:22px;top:429px;width:1322px;height:1px;background:#000"></div>
<div class="a" style="left:22px;top:445px;width:1322px;height:1px;background:#000"></div>
<div class="a" style="left:22px;top:461px;width:1322px;height:1px;background:#000"></div>
<div class="a" style="left:22px;top:477px;width:1322px;height:1px;background:#000"></div>
<div class="a" style="left:22px;top:493px;width:1322px;height:1px;background:#000"></div>
<div class="a" style="left:22px;top:509px;width:1322px;height:1px;background:#000"></div>
<div class="a" style="left:22px;top:525px;width:1322px;height:1px;background:#000"></div>
<div class="a" style="left:22px;top:541px;width:1322px;height:1px;background:#000"></div>
<div class="a" style="left:22px;top:557px;width:1322px;height:1px;background:#000"></div>
<div class="a" style="left:22px;top:573px;width:1322px;height:1px;background:#000"></div>
<div class="a" style="left:22px;top:589px;width:1322px;height:1px;background:#000"></div>
<div class="a" style="left:22px;top:605px;width:1322px;height:1px;background:#000"></div>
<div class="a" style="left:22px;top:621px;width:1322px;height:1px;background:#000"></div>
<div class="a" style="left:22px;top:637px;width:1322px;height:1px;background:#000"></div>
<div class="a" style="left:22px;top:653px;width:1322px;height:1px;background:#000"></div>
<div class="a" style="left:22px;top:669px;width:1322px;height:1px;background:#000"></div>
<div class="a" style="left:124px;top:393px;width:1px;height:285px;background:#000"></div>
<div class="a" style="left:215px;top:393px;width:1px;height:285px;background:#000"></div>
<div class="a" style="left:317px;top:393px;width:1px;height:285px;background:#000"></div>
<div class="a" style="left:507px;top:393px;width:1px;height:285px;background:#000"></div>
<div class="a" style="left:644px;top:393px;width:1px;height:285px;background:#000"></div>
<div class="a" style="left:813px;top:393px;width:1px;height:285px;background:#000"></div>
<div class="a" style="left:922px;top:393px;width:1px;height:285px;background:#000"></div>
<div class="a" style="left:1025px;top:393px;width:1px;height:285px;background:#000"></div>
<div class="a" style="left:1265px;top:393px;width:1px;height:285px;background:#000"></div>
<div class="a" style="left:22px;top:214px;width:1px;height:464px;background:#9e9e9e"></div>
<div class="a" style="left:21px;top:429px;width:2px;height:16px;background:#22734a"></div>
<div class="a" style="left:1344px;top:214px;width:1px;height:464px;background:#9e9e9e"></div>
</div>
<div id="vscroll" class="a"></div>
<div class="a" style="left:1348px;top:214px;width:15px;height:451px;background:#dadada"></div>
<div class="a" style="left:1348px;top:200px;width:15px;height:15px;background:#fff;border:1px solid #ababab"></div>
<div class="a" style="left:1352px;top:205px;width:0;height:0;border-left:4px solid transparent;border-right:4px solid transparent;border-bottom:4px solid #777"></div>
<div class="a" style="left:1348px;top:215px;width:15px;height:25px;background:#fff;border:1px solid #ababab"></div>
<div class="a" style="left:1348px;top:664px;width:15px;height:15px;background:#fff;border:1px solid #ababab"></div>
<div class="a" style="left:1352px;top:670px;width:0;height:0;border-left:4px solid transparent;border-right:4px solid transparent;border-top:4px solid #777"></div>
<div id="tabs" class="a"></div>
<div class="a" style="left:0;top:678px;width:1345px;height:1px;background:#9e9e9e"></div>
<div class="a" style="left:0;top:705px;width:1366px;height:1px;background:#cfcfcf"></div>
<div class="a" style="left:27px;top:688px;width:0;height:0;border-top:4px solid transparent;border-bottom:4px solid transparent;border-right:4px solid #c0c0c0"></div>
<div class="a" style="left:56px;top:688px;width:0;height:0;border-top:4px solid transparent;border-bottom:4px solid transparent;border-left:4px solid #c0c0c0"></div>
<div class="a" style="left:100px;top:678px;width:165px;height:22px;background:linear-gradient(#ffffff 0%,#f2fafd 35%,#b3dff4 100%);border-left:1px solid #b5b5b5;border-right:1px solid #b5b5b5"></div>
<div class="a" style="left:100px;top:700px;width:165px;height:2px;background:#22734a"></div>
<div class="a t" style="left:112px;top:685px;font-size:13px;line-height:13px;color:#22734a;font-weight:bold">Plantilla de empleados</div>
<svg class="a" style="left:297px;top:683px" width="18" height="18" viewBox="0 0 18 18"><circle cx="9" cy="9" r="7.5" fill="none" stroke="#c4c4c4" stroke-width="1.2"/><path d="M9 4.5v9M4.5 9h9" stroke="#c4c4c4" stroke-width="1.4"/></svg>
<div class="a" style="left:819px;top:686px;width:2px;height:2px;background:#aaa"></div><div class="a" style="left:819px;top:690px;width:2px;height:2px;background:#aaa"></div><div class="a" style="left:819px;top:694px;width:2px;height:2px;background:#aaa"></div>
<div class="a" style="left:851px;top:685px;width:479px;height:15px;background:#dadada"></div>
<div class="a" style="left:836px;top:685px;width:15px;height:15px;background:#fff;border:1px solid #ababab"></div>
<div class="a" style="left:841px;top:689px;width:0;height:0;border-top:4px solid transparent;border-bottom:4px solid transparent;border-right:4px solid #666"></div>
<div class="a" style="left:869px;top:685px;width:248px;height:15px;background:#fff;border:1px solid #ababab"></div>
<div class="a" style="left:1330px;top:685px;width:15px;height:15px;background:#fff;border:1px solid #ababab"></div>
<div class="a" style="left:1336px;top:689px;width:0;height:0;border-top:4px solid transparent;border-bottom:4px solid transparent;border-left:4px solid #666"></div>
<div id="status" class="a"></div>
<div class="a t" style="left:7px;top:711.4px;font-size:11.3px;line-height:11.3px;color:#444;">Celda E2 comentada por Maria Fernanda Vera Soriano</div>
<div class="a" style="left:1080px;top:706px;width:38px;height:22px;background:#c6c6c6"></div>
<svg class="a" style="left:1091px;top:710px" width="15" height="14" viewBox="0 0 15 14"><path d="M1 1h13v12H1zM1 5h13M1 9h13M5.3 1v12M9.6 1v12" fill="none" stroke="#666" stroke-width="1"/></svg>
<svg class="a" style="left:1129px;top:710px" width="15" height="14" viewBox="0 0 15 14"><rect x="0.7" y="0.7" width="13.6" height="12.6" fill="none" stroke="#666" stroke-width="1.2"/><rect x="3.5" y="3" width="8" height="8" fill="none" stroke="#666"/><path d="M5 5.5h5M5 7.5h5" stroke="#666"/></svg>
<svg class="a" style="left:1167px;top:710px" width="15" height="14" viewBox="0 0 15 14"><path d="M0.7 0.7h13.6v12.6H0.7zM0.7 7h6V0.7M6.5 0.7v6M10 0.7v5" fill="none" stroke="#666" stroke-width="1.2"/></svg>
<div class="a" style="left:1199px;top:716px;width:7px;height:2px;background:#555"></div>
<div class="a" style="left:1209px;top:716px;width:100px;height:1px;background:#aaa"></div>
<div class="a" style="left:1259px;top:713px;width:1px;height:6px;background:#aaa"></div>
<div class="a" style="left:1247px;top:710px;width:4px;height:12px;background:#666"></div>
<div class="a" style="left:1313px;top:716px;width:9px;height:2px;background:#555"></div><div class="a" style="left:1316.5px;top:712.5px;width:2px;height:9px;background:#555"></div>
<div class="a t" style="left:1337px;top:711.3px;font-size:11.5px;line-height:11.5px;color:#555;">80%</div>
<div id="taskbar" class="a"></div>
<svg class="a" style="left:16px;top:740px" width="16" height="16" viewBox="0 0 16 16"><path d="M0 2.2l6.5-.9v6.2H0zM7.3 1.2L16 0v7.5H7.3zM0 8.3h6.5v6.3L0 13.8zM7.3 8.3H16V16l-8.7-1.2z" fill="#fff"/></svg>
<div class="a" style="left:48px;top:728px;width:288px;height:40px;background:#f0f0f0;border:1px solid #d8d8d8;border-bottom:none"></div>
<svg class="a" style="left:59px;top:740px" width="18" height="17" viewBox="0 0 18 17"><circle cx="11" cy="6.5" r="5.3" fill="none" stroke="#222" stroke-width="1.5"/><path d="M7.2 10.3L1 16.5" stroke="#222" stroke-width="1.6"/></svg>
<div class="a t" style="left:88px;top:741.3px;font-size:14.5px;line-height:14.5px;color:#222;">Buscar</div>
<svg class="a" style="left:264px;top:735px" width="62" height="26" viewBox="264 735 62 26"><path d="M286.5 736c1.2 6 4 8.8 10.5 10.5-6.5 1.7-9.3 4.5-10.5 11.5-1.2-7-4-9.8-10.5-11.5 6.5-1.7 9.3-4.5 10.5-10.5z" fill="#f5b81c"/><path d="M310.5 747c.6 3 2 4.6 5.5 5.5-3.5.9-4.9 2.5-5.5 5.5-.6-3-2-4.6-5.5-5.5 3.5-.9 4.9-2.5 5.5-5.5z" fill="#f5c02a"/><path d="M268.5 750c.4 2 1.3 3 3.5 3.5-2.2.5-3.1 1.5-3.5 3.5-.4-2-1.3-3-3.5-3.5 2.2-.5 3.1-1.5 3.5-3.5z" fill="#2a9de8"/><circle cx="304" cy="737.5" r="1.6" fill="#e8622a"/><circle cx="323" cy="757" r="1.6" fill="#7cc04b"/></svg>
<div class="a" style="left:519px;top:385px;width:116px;height:50px;background:#ffffe1;border:1px solid #000"></div>
<div class="a t" style="left:528px;top:387.5px;font-size:12.4px;line-height:12.4px;color:#111;">Campo obligatorio</div>
<div class="a t" style="left:528px;top:403.1px;font-size:12.4px;line-height:12.4px;color:#111;">Selecciona una de</div>
<div class="a t" style="left:523px;top:418.8px;font-size:12.4px;line-height:12.4px;color:#111;">las opciones</div>
<div class="a" style="left:523px;top:389px;width:3px;height:3px;border-radius:50%;background:#111"></div>
<div class="a" style="left:523px;top:405px;width:3px;height:3px;border-radius:50%;background:#111"></div>
<svg class="a" style="left:335px;top:409px" width="18" height="18" viewBox="0 0 18 18"><path d="M6 2h6v5h5v6h-5v5H6v-5H1V7h5z" fill="#000" opacity=".55"/><path d="M5.5 1.5h5.5v4.5h4.5v5.5H11V16H5.5v-4.5H1V6h4.5z" fill="#fff" stroke="#000" stroke-width="1.5"/></svg>
<svg class="a" style="left:505px;top:384px" width="20" height="14" viewBox="505 384 20 14"><path d="M519.5 386.5L509 394.5" stroke="#000" stroke-width="1"/><path d="M508 395.5l4.5-1.2-2-2.5z" fill="#000"/></svg>
<svg class="a" style="left:351px;top:739px" width="18" height="17" viewBox="0 0 18 17"><path d="M1 1.5h12M1 15.5h12M2 4.5h10v8H2z" fill="none" stroke="#fff" stroke-width="1.3"/><path d="M16 1v15" stroke="#fff" stroke-width="1.2"/><rect x="14.5" y="5.5" width="3" height="3" fill="#fff"/></svg>
<svg class="a" style="left:398px;top:735px" width="26" height="26" viewBox="0 0 26 26"><defs><linearGradient id="eg" x1="0" y1="0" x2="1" y2="1"><stop offset="0" stop-color="#36c3e8"/><stop offset="0.6" stop-color="#4fc86a"/><stop offset="1" stop-color="#1d6fd1"/></linearGradient></defs><path d="M2 13C2 6 7 1 13.5 1 20 1 25 6 25 11.5c0 4-3 6.5-6 6.5-2.5 0-4-1-4-2.5 0-1 1-1.5 1-3 0-3-2.5-5-5.5-5C6 7.5 2 10 2 13z" fill="url(#eg)"/><path d="M2 13c0 6 5 12 12 12 4 0 7-2 9-4.5-2 1-4 1.2-6 1-5-.5-9-4-9-8.5 0-2 1-3.5 2.5-4.5C6 8.5 2 10 2 13z" fill="#1565c0"/><rect x="1" y="15" width="11" height="10" rx="1" fill="#c9731e"/><rect x="1" y="15" width="11" height="3" fill="#e09a35"/><rect x="5.5" y="18.5" width="2" height="2" fill="#f4d46a"/></svg>
<div class="a" style="left:391px;top:766px;width:39px;height:2px;background:#76b9ed"></div>
<svg class="a" style="left:449px;top:738px" width="23" height="20" viewBox="0 0 23 20"><path d="M0 2h8l2 2h13v16H0z" fill="#e8a93a"/><rect x="0" y="5" width="23" height="15" fill="#f6cf63"/><path d="M6 19.5V11h11v8.5h-2.5V13.5h-6v6z" fill="#3b8ede"/></svg>
<div class="a" style="left:440px;top:766px;width:40px;height:2px;background:#76b9ed"></div>
<svg class="a" style="left:497px;top:736px" width="24" height="24" viewBox="0 0 24 24"><rect width="24" height="24" fill="#1e50c0"/><path d="M9 7l5 5-5 5-5-5z" fill="#fff"/><path d="M14 7.5l4.5 4.5-4.5 4.5" fill="none" stroke="#fff" stroke-width="1.6"/></svg>
<svg class="a" style="left:545px;top:735px" width="30" height="28" viewBox="0 0 30 28"><circle cx="9" cy="4.5" r="3.8" fill="#8a8de8"/><circle cx="19" cy="8.5" r="3" fill="#8a8de8"/><path d="M3 11h15v9c0 4-3 6.5-7.5 6.5S3 24 3 20z" fill="#6264d0"/><rect x="1" y="13" width="10" height="10" rx="1" fill="#4b4fb8"/><path d="M3.5 15.5h5M6 15.5v6" stroke="#fff" stroke-width="1.4"/><circle cx="19.5" cy="18" r="7.8" fill="#d0101b" stroke="#fff" stroke-width="1"/></svg>
<div class="a" style="left:538px;top:766px;width:40px;height:2px;background:#76b9ed"></div>
<svg class="a" style="left:596px;top:737px" width="23" height="23" viewBox="0 0 23 23"><rect x="11" y="3" width="11" height="17" fill="#fff"/><path d="M13 6h8M13 8.5h8M13 11h8M13 13.5h8M13 16h8" stroke="#5a7ec0" stroke-width="0.9"/><path d="M0 2.5L13 0v23L0 20.5z" fill="#2b579a"/><text x="2" y="15.5" font-size="9.5" font-weight="bold" fill="#fff" font-family="Liberation Sans">W</text></svg>
<div class="a" style="left:587px;top:766px;width:40px;height:2px;background:#76b9ed"></div>
<svg class="a" style="left:644px;top:737px" width="24" height="23" viewBox="0 0 24 23"><rect x="11" y="3" width="12" height="17" fill="#fff"/><path d="M13 6h9M13 9h9M13 12h9M13 15h9M17 4v15" stroke="#3f8a5a" stroke-width="0.9"/><path d="M0 2.5L13 0v23L0 20.5z" fill="#22734a"/><text x="2.5" y="15.5" font-size="10" font-weight="bold" fill="#fff" font-family="Liberation Sans">X</text></svg>
<div class="a" style="left:636px;top:766px;width:40px;height:2px;background:#76b9ed"></div>
<svg class="a" style="left:975px;top:735px" width="26" height="26" viewBox="0 0 26 26"><defs><linearGradient id="dg" x1="0" y1="0" x2="0" y2="1"><stop offset="0" stop-color="#3ab4f0"/><stop offset="1" stop-color="#1a86d8"/></linearGradient></defs><rect x="1" y="4" width="4" height="18" fill="#2a90d8"/><path d="M2 8h2M2 12h2M2 16h2" stroke="#1b5e9a" stroke-width="0.8"/><path d="M16.5 1C13 7 9 12 9 17a7.5 7.5 0 0 0 15 0c0-5-4-10-7.5-16z" fill="url(#dg)"/></svg>
<div class="a t" style="left:1007px;top:741.2px;font-size:13.5px;line-height:13.5px;color:#fff;">Humedad</div>
<svg class="a" style="left:1092px;top:744px" width="14" height="8" viewBox="0 0 14 8"><path d="M1 7l6-6 6 6" fill="none" stroke="#fff" stroke-width="1.3"/></svg>
<svg class="a" style="left:1116px;top:739px" width="13" height="18" viewBox="0 0 13 18"><rect x="3" y="0.5" width="7" height="11" rx="3.5" fill="#fff"/><path d="M1 8c0 3.5 2.5 5.5 5.5 5.5S12 11.5 12 8M6.5 13.5v3M3.5 17h6" fill="none" stroke="#fff" stroke-width="1.2"/></svg>
<svg class="a" style="left:1138px;top:742px" width="18" height="11" viewBox="0 0 18 11"><path d="M1.5 1v2.5M4.5 1v2.5M0.5 3.5h5v2c0 1.5-1 2.5-2.5 2.5S0.5 7 0.5 5.5zM3 8v3" fill="none" stroke="#fff" stroke-width="1"/><rect x="5.5" y="2.5" width="11" height="7" fill="none" stroke="#fff" stroke-width="1.1"/><rect x="7" y="4" width="8" height="4" fill="#fff"/><rect x="16.5" y="4.5" width="1.5" height="3" fill="#fff"/></svg>
<svg class="a" style="left:1165px;top:742px" width="15" height="14" viewBox="0 0 15 14"><path d="M1 13A12 12 0 0 1 13 1M4 13a9 9 0 0 1 9-9M7 13a6 6 0 0 1 6-6" fill="none" stroke="#fff" stroke-width="1.1" opacity="0.9"/><circle cx="12" cy="12" r="1.6" fill="#fff"/></svg>
<svg class="a" style="left:1186px;top:742px" width="18" height="14" viewBox="0 0 18 14"><path d="M1 4.5h3L8.5 1v12L4 9.5H1z" fill="none" stroke="#fff" stroke-width="1.1"/><path d="M11 4.5c1 1.5 1 3.5 0 5M13.5 3c1.8 2.5 1.8 5.5 0 8M16 1.5c2.5 3.5 2.5 7.5 0 11" fill="none" stroke="#fff" stroke-width="1"/></svg>
<div class="a t" style="left:1215px;top:741.5px;font-size:12px;line-height:12px;color:#fff;letter-spacing:-1.6px">ESP</div>
<div class="a t" style="left:1253px;top:732.8px;font-size:12px;line-height:12px;color:#fff;letter-spacing:-0.35px">9:51 a. m.</div>
<div class="a t" style="left:1252px;top:750.8px;font-size:12px;line-height:12px;color:#fff;">4/11/2025</div>
<svg class="a" style="left:1324px;top:739px" width="28" height="27" viewBox="0 0 28 27"><path d="M1 1h16v11H9l-4 4v-4H1z" fill="#fff"/><path d="M4 4h10M4 6.5h10M4 9h7" stroke="#333" stroke-width="1"/><circle cx="16.5" cy="17" r="8" fill="#2a3a34" stroke="#aaa" stroke-width="1"/><text x="13.5" y="21.5" font-size="11" font-weight="bold" fill="#fff" font-family="Liberation Sans">1</text></svg>
<div class="a" style="left:1361px;top:728px;width:1px;height:40px;background:#6b7a70"></div>
</body></html>
